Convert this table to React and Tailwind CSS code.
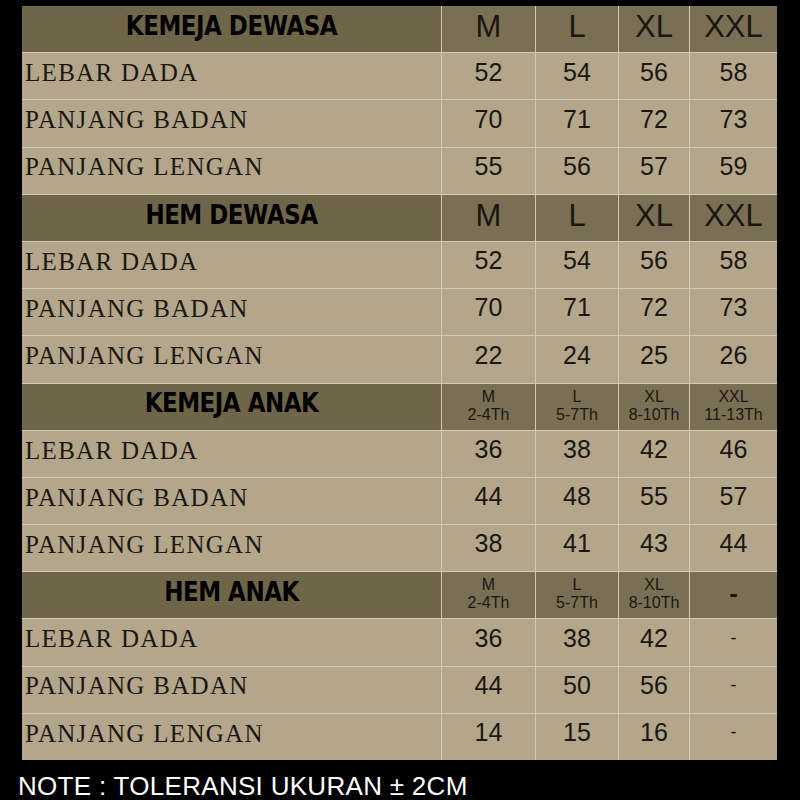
import React from 'react';

const SECTIONS = [
  {
    title: 'KEMEJA DEWASA',
    sizes: ['M', 'L', 'XL', 'XXL'],
    rows: [
      ['LEBAR DADA', '52', '54', '56', '58'],
      ['PANJANG BADAN', '70', '71', '72', '73'],
      ['PANJANG LENGAN', '55', '56', '57', '59'],
    ],
  },
  {
    title: 'HEM DEWASA',
    sizes: ['M', 'L', 'XL', 'XXL'],
    rows: [
      ['LEBAR DADA', '52', '54', '56', '58'],
      ['PANJANG BADAN', '70', '71', '72', '73'],
      ['PANJANG LENGAN', '22', '24', '25', '26'],
    ],
  },
  {
    title: 'KEMEJA ANAK',
    sizes: [['M', '2-4Th'], ['L', '5-7Th'], ['XL', '8-10Th'], ['XXL', '11-13Th']],
    rows: [
      ['LEBAR DADA', '36', '38', '42', '46'],
      ['PANJANG BADAN', '44', '48', '55', '57'],
      ['PANJANG LENGAN', '38', '41', '43', '44'],
    ],
  },
  {
    title: 'HEM ANAK',
    sizes: [['M', '2-4Th'], ['L', '5-7Th'], ['XL', '8-10Th'], '-'],
    rows: [
      ['LEBAR DADA', '36', '38', '42', '-'],
      ['PANJANG BADAN', '44', '50', '56', '-'],
      ['PANJANG LENGAN', '14', '15', '16', '-'],
    ],
  },
];

function SizeHead({ size }) {
  if (Array.isArray(size)) {
    return (
      <div className="h-[46.2px] bg-[#7a6f55] flex flex-col items-center justify-center pb-[2px] text-[16px] leading-[18px] text-[#1b1710] font-['Liberation_Sans',Arial,sans-serif]">
        <span>{size[0]}</span>
        <span>{size[1]}</span>
      </div>
    );
  }
  if (size === '-') {
    return (
      <div className="h-[46.2px] bg-[#7a6f55] flex items-center justify-center pb-[4px] text-[26px] font-bold text-[#1b1710] font-['Liberation_Sans',Arial,sans-serif]">
        -
      </div>
    );
  }
  return (
    <div className="h-[46.2px] bg-[#7a6f55] flex items-center justify-center pb-[3px] text-[31px] text-[#1b1710] font-['Liberation_Sans',Arial,sans-serif]">
      {size}
    </div>
  );
}

export default function App() {
  return (
    <div className="w-[800px] h-[800px] bg-black pt-[6px] overflow-hidden">
      <div className="ml-[22px] w-[755px] grid grid-cols-[419px_93px_82px_70px_87px] gap-px bg-[#d3c9b7]">
        {SECTIONS.map((sec) => (
          <React.Fragment key={sec.title}>
            <div className="h-[46.2px] bg-[#6f6548] flex items-center justify-center pb-[6px]">
              <span className="text-[23px] font-black text-black tracking-[-0.5px] scale-y-[1.12] font-['DejaVu_Sans',sans-serif]">
                {sec.title}
              </span>
            </div>
            {sec.sizes.map((s, i) => (
              <SizeHead key={i} size={s} />
            ))}
            {sec.rows.map((row) => (
              <React.Fragment key={row[0]}>
                <div className="h-[46.2px] bg-[#b3a68b] flex items-center pl-[3px] pb-[7px] text-[25px] tracking-[1.3px] text-[#1b1710] font-['Liberation_Serif','Times_New_Roman',serif]">
                  {row[0]}
                </div>
                {row.slice(1).map((v, i) => (
                  <div
                    key={i}
                    className={`h-[46.2px] bg-[#b3a68b] flex items-center justify-center pb-[8px] text-[#1b1710] font-['Liberation_Sans',Arial,sans-serif] ${v === '-' ? 'text-[18px]' : 'text-[25px]'}`}
                  >
                    {v}
                  </div>
                ))}
              </React.Fragment>
            ))}
          </React.Fragment>
        ))}
      </div>
      <div className="mt-[12px] ml-[18px] text-white text-[26px] leading-[28px] tracking-[0.3px] font-['Liberation_Sans',Arial,sans-serif]">
        NOTE : TOLERANSI UKURAN ± 2CM
      </div>
    </div>
  );
}
